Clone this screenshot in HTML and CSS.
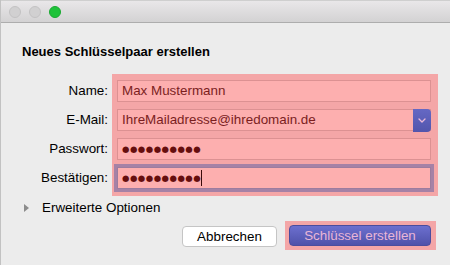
FILE: index.html
```html
<!DOCTYPE html>
<html lang="de">
<head>
<meta charset="utf-8">
<title>Neues Schlüsselpaar erstellen</title>
<link rel="stylesheet" href="styles.css">
</head>
<body>
<div class="window">
  <div class="titlebar">
    <span class="light grey"></span>
    <span class="light grey"></span>
    <span class="light green"></span>
  </div>
  <div class="content">
    <h1 class="title">Neues Schlüsselpaar erstellen</h1>
    <div class="form">
      <div class="labels">
        <div class="label">Name:</div>
        <div class="label">E-Mail:</div>
        <div class="label">Passwort:</div>
        <div class="label">Bestätigen:</div>
      </div>
      <div class="fields">
        <div class="field">Max Mustermann</div>
        <div class="field select">
          <span class="value">IhreMailadresse@ihredomain.de</span>
          <span class="arrow"><svg width="8" height="5" viewBox="0 0 8 5"><path d="M1 1 L4 4 L7 1" fill="none" stroke="#e9b9d8" stroke-width="1.3" stroke-linecap="round" stroke-linejoin="round"/></svg></span>
        </div>
        <div class="field"><span class="dots">●●●●●●●●●●</span></div>
        <div class="field focus"><span class="dots">●●●●●●●●●●</span><span class="caret"></span></div>
      </div>
    </div>
    <div class="disclosure"><span class="tri"></span>Erweiterte Optionen</div>
    <div class="buttons">
      <button class="btn">Abbrechen</button>
      <div class="hl-btn"><button class="btn primary">Schlüssel erstellen</button></div>
    </div>
  </div>
</div>
</body>
</html>
```

FILE: styles.css
```css
* { box-sizing: border-box; }
html, body {
  margin: 0;
  padding: 0;
  width: 450px;
  height: 265px;
  overflow: hidden;
  background: #ececec;
}
body {
  font-family: "Liberation Sans", Arial, sans-serif;
  font-size: 13.4px;
  color: #000;
}
.window {
  width: 450px;
  height: 265px;
  background: #ececec;
  border-left: 1px solid #c2c2c2;
}
.titlebar {
  height: 23px;
  display: flex;
  align-items: center;
  gap: 8px;
  padding-left: 8px;
  background: linear-gradient(#e9e7e9, #d3d2d3);
  border-top: 1px solid #cfcfcf;
  border-bottom: 1px solid #adadad;
}
.light {
  width: 12px;
  height: 12px;
  border-radius: 50%;
}
.light.grey {
  background: #d1d0d1;
  border: 1px solid #c3c2c3;
}
.light.green {
  background: #1fc23a;
  border: 1px solid #1aa931;
}
.content {
  padding: 21px 0 0 21px;
}
.title {
  margin: 0;
  font-size: 13px;
  line-height: 16px;
  font-weight: bold;
}
.form {
  display: flex;
  gap: 4px;
  margin-top: 14px;
}
.labels {
  width: 86px;
  padding-top: 6px;
  display: flex;
  flex-direction: column;
  gap: 7px;
}
.label {
  height: 22px;
  line-height: 22px;
  text-align: right;
}
.fields {
  width: 326px;
  background: #f4a6a7;
  padding: 6px 7px 7px 5px;
  display: flex;
  flex-direction: column;
  gap: 7px;
}
.field {
  height: 22px;
  background: #fdafaf;
  border: 1px solid #dc9192;
  padding-left: 4px;
  display: flex;
  align-items: center;
  color: #7b1e1e;
  line-height: 20px;
}
.select .value { flex: 1; }
.arrow {
  width: 18px;
  height: 23px;
  margin: -1px -1px -1px 0;
  border-radius: 0 4px 4px 0;
  background: linear-gradient(#6568c4, #5255ac);
  display: flex;
  align-items: center;
  justify-content: center;
}
.dots {
  font-family: "DejaVu Sans", sans-serif;
  font-size: 8.5px;
  letter-spacing: 0.5px;
  color: #660e0e;
}
.focus {
  border-color: #9d7c9e;
  box-shadow: 0 0 0 3px #a582a6;
}
.caret {
  width: 1px;
  height: 16px;
  background: #3a0b0b;
  margin-left: 0;
}
.disclosure {
  margin-top: 4px;
  height: 16px;
  line-height: 16px;
  display: flex;
  align-items: center;
}
.tri {
  width: 0;
  height: 0;
  border-left: 5px solid #8c8c8c;
  border-top: 4px solid transparent;
  border-bottom: 4px solid transparent;
  margin-left: 2px;
  margin-right: 13px;
}
.buttons {
  margin-top: 5px;
  display: flex;
  justify-content: flex-end;
  align-items: center;
  gap: 8px;
  padding-right: 14px;
}
.btn {
  font-family: "Liberation Sans", Arial, sans-serif;
  font-size: 13.4px;
  height: 21px;
  padding: 0;
  border-radius: 4px;
  background: #fff;
  border: 1px solid #c5c5c5;
  color: #000;
  width: 95px;
  margin-top: 1px;
}
.hl-btn {
  background: #f4a6a7;
  padding: 4px 5px 4px 4px;
}
.primary {
  width: 142px;
  margin-top: 0;
  background: linear-gradient(#6c6fcf, #4f52aa);
  border: 1px solid #4b4d9e;
  color: #e9b6d6;
}
```
